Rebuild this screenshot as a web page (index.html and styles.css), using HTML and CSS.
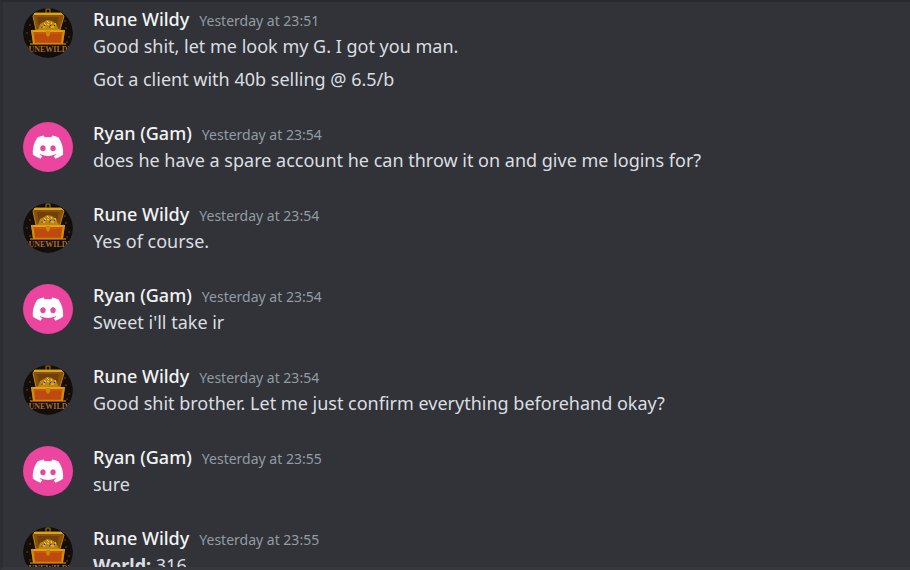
FILE: index.html
```
<!DOCTYPE html>
<html lang="en">
<head>
<meta charset="utf-8">
<meta name="viewport" content="width=device-width, initial-scale=1">
<title>Direct messages</title>
<link rel="stylesheet" href="styles.css">
</head>
<body>
<svg class="symbols" aria-hidden="true">
  <symbol id="chest" viewBox="0 0 50 50">
    <clipPath id="disc"><circle cx="25" cy="25" r="25"/></clipPath>
    <g clip-path="url(#disc)">
    <circle cx="25" cy="25" r="25" fill="#130e09"/>
    <g fill="#4b3013"><circle cx="7" cy="17" r="1"/><circle cx="10" cy="27" r="1"/><circle cx="4" cy="25" r="1"/><circle cx="43" cy="20" r="1"/><circle cx="46" cy="29" r="1"/><circle cx="42" cy="13" r="1"/><circle cx="44" cy="34" r="1"/><circle cx="7" cy="33" r="1"/></g>
    <path d="M23 5V1h4v4" fill="none" stroke="#a5780c" stroke-width="1"/>
    <path d="M12 5h26l3 3-4 14H13L10 8z" fill="#8a500b" stroke="#bf8a0b" stroke-width="1"/>
    <path d="M11 6h28" stroke="#dba50c" stroke-width="2"/>
    <path d="M14 9h22l-2 12H16z" fill="#70400a"/>
    <path d="M15 22l2-6 4-2 3-2 5 1 4 3 3 6z" fill="#b98614"/>
    <path d="M18 18l2 1m1-4l2 2m1-4l2 2m2-1l1 2m3-1l1 2m-9-1l2 1m-7 2h3m6 0h3" stroke="#eed15b" stroke-width="1"/>
    <path d="M21 17l1 1m5-1l1 1m3-1l1 1m-14 1h2m6 0h1" stroke="#4c310b" stroke-width="1"/>
    <path d="M8 22h34l-2 14H10z" fill="#c9560c"/>
    <path d="M8 23h34" stroke="#e1a40c" stroke-width="2"/>
    <path d="M9 22l2 13M41 22l-2 13" stroke="#cf900b" stroke-width="2"/>
    <path d="M12 26h26v8H12z" fill="#bd4a0f"/>
    <path d="M7 36h36" stroke="#eaa80d" stroke-width="1"/>
    <path d="M23 23h4v4l-2 2-2-2z" fill="#ca870b"/>
    <text x="25" y="44" text-anchor="middle" font-family="Liberation Serif, serif" font-weight="700" font-size="8" fill="#a86c34">RUNEWILDY</text>
    </g>
  </symbol>
  <symbol id="gamepad" viewBox="0 0 50 50">
    <circle cx="25" cy="25" r="25" fill="#eb459f"/>
    <path transform="translate(9.8 13.6) scale(.239 .239)" fill="#fff" d="M107.7 8.07A105.15 105.15 0 0 0 81.47 0a72.06 72.06 0 0 0-3.36 6.83 97.68 97.68 0 0 0-29.11 0A72.37 72.37 0 0 0 45.64 0a105.89 105.89 0 0 0-26.25 8.09C2.79 32.65-1.71 56.6.54 80.21a105.73 105.73 0 0 0 32.17 16.15 77.7 77.7 0 0 0 6.89-11.11 68.42 68.42 0 0 1-10.85-5.18c.91-.66 1.8-1.34 2.66-2a75.57 75.57 0 0 0 64.32 0c.87.71 1.76 1.39 2.66 2a68.68 68.68 0 0 1-10.87 5.19 77 77 0 0 0 6.89 11.1 105.25 105.25 0 0 0 32.19-16.14c2.64-27.38-4.51-51.11-18.9-72.15zM42.45 65.69C36.18 65.69 31 60 31 53s5-12.74 11.43-12.74S54 46 53.89 53s-5.05 12.69-11.44 12.69zm42.24 0C78.41 65.69 73.25 60 73.25 53s5-12.74 11.44-12.74S96.23 46 96.12 53s-5.04 12.69-11.43 12.69z"/>
  </symbol>
</svg>
<main class="chat">
  <article class="message">
    <svg class="avatar" role="img" aria-label="Rune Wildy"><use href="#chest"/></svg>
    <div class="content">
      <header class="meta"><h2 class="author">Rune Wildy</h2><time class="time">Yesterday at 23:51</time></header>
      <p class="text">Good shit, let me look my G. I got you man.</p>
      <p class="text">Got a client with 40b selling @ 6.5/b</p>
    </div>
  </article>
  <article class="message">
    <svg class="avatar" role="img" aria-label="Ryan (Gam)"><use href="#gamepad"/></svg>
    <div class="content">
      <header class="meta"><h2 class="author">Ryan (Gam)</h2><time class="time">Yesterday at 23:54</time></header>
      <p class="text">does he have a spare account he can throw it on and give me logins for?</p>
    </div>
  </article>
  <article class="message">
    <svg class="avatar" role="img" aria-label="Rune Wildy"><use href="#chest"/></svg>
    <div class="content">
      <header class="meta"><h2 class="author">Rune Wildy</h2><time class="time">Yesterday at 23:54</time></header>
      <p class="text">Yes of course.</p>
    </div>
  </article>
  <article class="message">
    <svg class="avatar" role="img" aria-label="Ryan (Gam)"><use href="#gamepad"/></svg>
    <div class="content">
      <header class="meta"><h2 class="author">Ryan (Gam)</h2><time class="time">Yesterday at 23:54</time></header>
      <p class="text">Sweet i'll take ir</p>
    </div>
  </article>
  <article class="message">
    <svg class="avatar" role="img" aria-label="Rune Wildy"><use href="#chest"/></svg>
    <div class="content">
      <header class="meta"><h2 class="author">Rune Wildy</h2><time class="time">Yesterday at 23:54</time></header>
      <p class="text">Good shit brother. Let me just confirm everything beforehand okay?</p>
    </div>
  </article>
  <article class="message">
    <svg class="avatar" role="img" aria-label="Ryan (Gam)"><use href="#gamepad"/></svg>
    <div class="content">
      <header class="meta"><h2 class="author">Ryan (Gam)</h2><time class="time">Yesterday at 23:55</time></header>
      <p class="text">sure</p>
    </div>
  </article>
  <article class="message">
    <svg class="avatar" role="img" aria-label="Rune Wildy"><use href="#chest"/></svg>
    <div class="content">
      <header class="meta"><h2 class="author">Rune Wildy</h2><time class="time">Yesterday at 23:55</time></header>
      <p class="text"><strong>World:</strong> 316</p>
    </div>
  </article>
</main>
</body>
</html>
```
FILE: styles.css
```
* { box-sizing: border-box; }
body {
  margin: 0;
  height: 100vh;
  overflow: hidden;
  background: #313338;
  color: #dbdee1;
  font-family: "Noto Sans", sans-serif;
}
.symbols { position: absolute; width: 0; height: 0; }
.chat {
  height: 100%;
  overflow: hidden;
  padding: 3px 20px 0;
  border-top: 2px solid #292a2f;
  border-left: 3px solid #2d2e33;
  border-bottom: 3px solid #37383e;
  display: flex;
  flex-direction: column;
  gap: 26px;
}
.message { display: flex; gap: 20px; flex: none; }
.avatar { width: 50px; height: 50px; margin-top: 3px; flex: none; }
.content { min-width: 0; }
.meta { display: flex; align-items: baseline; gap: 10px; height: 27px; }
.author { margin: 0; color: #f2f3f5; font-size: 18px; line-height: 28px; font-weight: 500; }
.time { color: #949ba4; font-size: 14px; line-height: 28px; }
.text { margin: 0; font-size: 18px; line-height: 28px; }
.text + .text { margin-top: 5px; }
```
